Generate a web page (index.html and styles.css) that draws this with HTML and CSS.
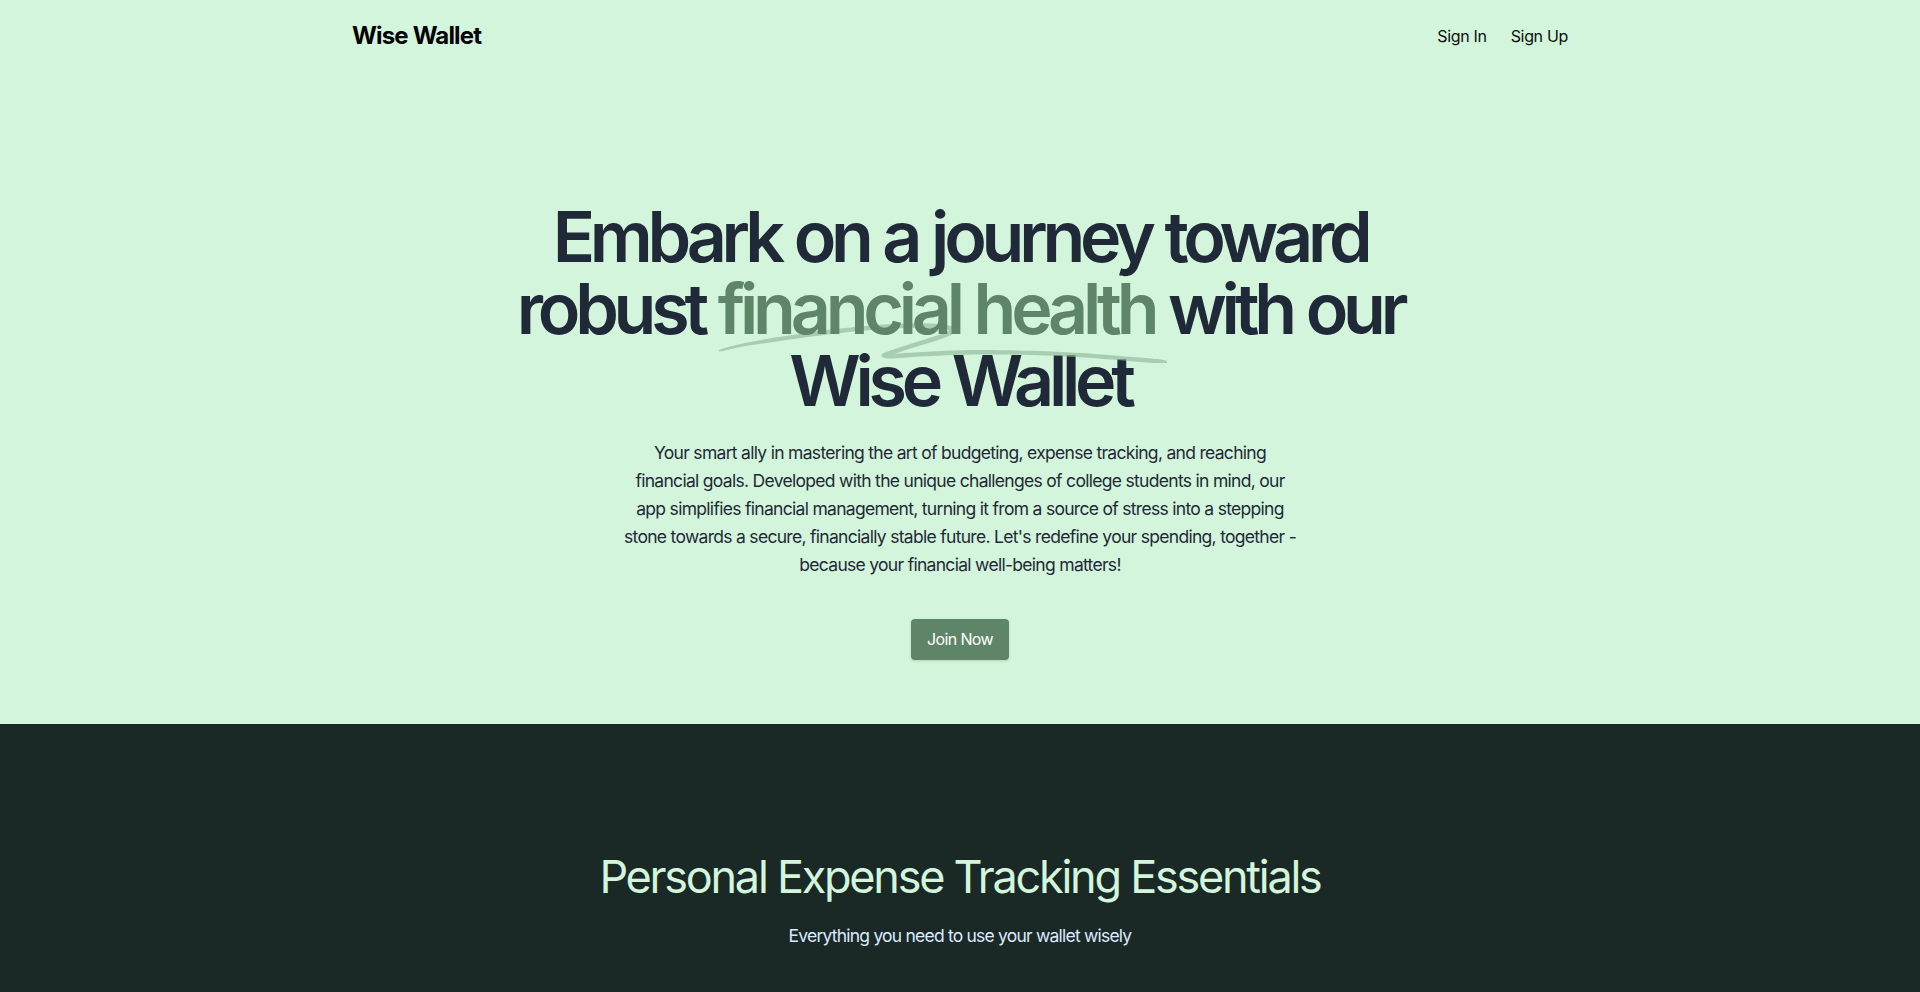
FILE: index.html
```html
<!DOCTYPE html>
<html lang="en">
<head>
<meta charset="utf-8">
<title>Wise Wallet</title>
<link rel="stylesheet" href="styles.css">
</head>
<body>
<div class="page">
  <header class="header">
    <div class="container nav">
      <a class="brand" href="#">Wise Wallet</a>
      <nav class="nav-links">
        <a href="#">Sign In</a>
        <a href="#">Sign Up</a>
      </nav>
    </div>
  </header>

  <section class="hero">
    <div class="container hero-inner">
      <h1 class="hero-title">Embark on a journey toward robust <span class="accent"><svg class="swoosh" aria-hidden="true" viewBox="0 0 418 42" preserveAspectRatio="none"><path d="M203.371.916c-26.013-2.078-76.686 1.963-124.73 9.946L67.3 12.749C35.421 18.062 18.2 21.766 6.004 25.934 1.244 27.561.828 27.778.874 28.61c.07 1.214.828 1.121 9.595-1.176 9.072-2.377 17.15-3.920 39.246-7.496C123.565 7.986 157.869 4.492 195.942 5.046c7.461.108 19.25 1.696 19.17 2.582-.107 1.183-7.874 4.310-25.750 10.366-21.992 7.450-35.430 12.534-36.701 13.884-2.173 2.308-.202 4.407 4.442 4.734 2.654.187 3.263.157 15.593-.780 35.401-2.686 57.944-3.488 88.365-3.143 46.327.526 75.721 2.230 130.788 7.584 19.787 1.924 20.814 1.980 24.557 1.332l.066-.011c1.201-.203 1.530-1.825.399-2.335-2.911-1.310-4.893-1.604-22.048-3.261-57.509-5.556-87.871-7.360-132.059-7.842-23.239-.254-33.617-.116-50.627.674-11.629.540-42.371 2.494-46.696 2.967-2.359.259 8.133-3.625 26.504-9.810 23.239-7.825 27.934-10.149 28.304-14.005.417-4.348-3.529-6-16.878-7.066Z"/></svg><span class="accent-text">financial health</span></span> with our Wise Wallet</h1>
      <p class="hero-text">Your smart ally in mastering the art of budgeting, expense tracking, and reaching financial goals. Developed with the unique challenges of college students in mind, our app simplifies financial management, turning it from a source of stress into a stepping stone towards a secure, financially stable future. Let's redefine your spending, together - because your financial well-being matters!</p>
      <div class="hero-actions">
        <a class="btn" href="#">Join Now</a>
      </div>
    </div>
  </section>

  <section class="features">
    <div class="container features-inner">
      <h2 class="features-title">Personal Expense Tracking Essentials</h2>
      <p class="features-sub">Everything you need to use your wallet wisely</p>
    </div>
  </section>
</div>
</body>
</html>
```

FILE: styles.css
```css
* { box-sizing: border-box; }
html, body { margin: 0; padding: 0; }
body {
  font-family: Inter, "Noto Sans", "Liberation Sans", sans-serif;
  background: #1a2826;
  color: #111;
}
a { text-decoration: none; color: inherit; }

.container {
  max-width: 1280px;
  margin: 0 auto;
  padding: 0 32px;
}

.header { background: #d3f5dc; padding: 20px 0; }
.nav {
  display: flex;
  align-items: center;
  justify-content: space-between;
}
.brand {
  font-size: 24px;
  line-height: 32px;
  font-weight: 700;
  letter-spacing: -0.035em;
  color: #000;
}
.nav-links {
  display: flex;
  gap: 24px;
  font-size: 16px;
  line-height: 24px;
  letter-spacing: -0.02em;
  color: #0b0f0d;
}

.hero {
  background: #d3f5dc;
  padding: 129px 0 64px;
}
.hero-inner { text-align: center; }
.hero-title {
  margin: 0 auto;
  max-width: 960px;
  font-size: 70px;
  line-height: 72px;
  font-weight: 600;
  letter-spacing: -0.075em;
  word-spacing: 0.02em;
  color: #1f2937;
}
.accent {
  position: relative;
  white-space: nowrap;
  color: #5e8567;
}
.swoosh {
  position: absolute;
  left: 0;
  top: 66.6667%;
  width: 103%;
  height: 0.58em;
  fill: rgba(150, 190, 160, 0.7);
}
.accent-text { position: relative; }

.hero-text {
  margin: 22px auto 0;
  max-width: 672px;
  font-size: 17.5px;
  line-height: 28px;
  letter-spacing: -0.04em;
  color: #1f2937;
}
.hero-actions {
  margin-top: 40px;
  display: flex;
  justify-content: center;
}
.btn {
  display: inline-block;
  background: #5e8567;
  color: #fff;
  font-size: 16px;
  line-height: 25px;
  letter-spacing: -0.04em;
  padding: 8px 16px;
  border-radius: 4px;
  box-shadow: 0 1px 3px rgba(0,0,0,0.15);
}

.features {
  background: #1a2826;
  padding: 130px 0 64px;
}
.features-inner { text-align: center; }
.features-title {
  margin: 0;
  font-size: 45px;
  line-height: 45px;
  font-weight: 400;
  letter-spacing: -0.05em;
  color: #d3f5dc;
}
.features-sub {
  margin: 23px 0 0;
  font-size: 17.5px;
  line-height: 28px;
  letter-spacing: -0.045em;
  color: #dbeafe;
}
```
